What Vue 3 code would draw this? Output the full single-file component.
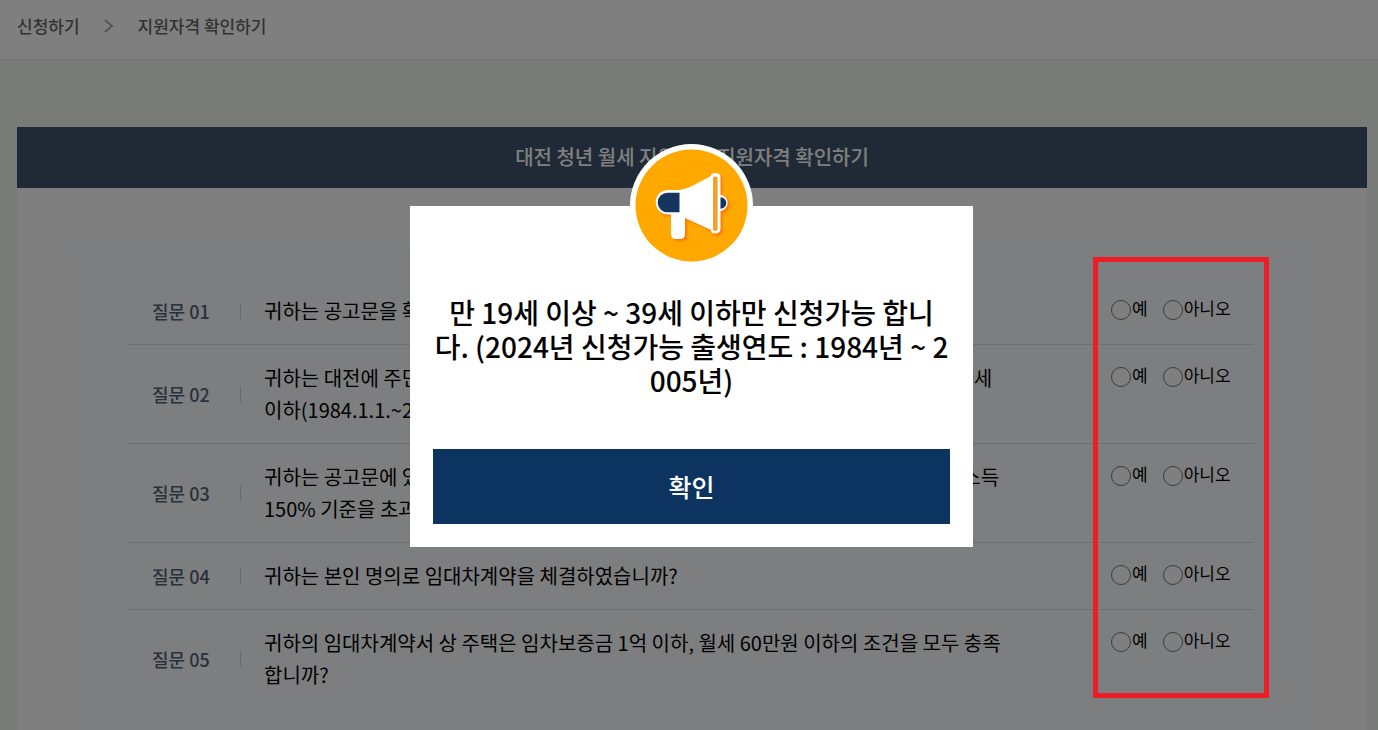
<script setup>
import { ref } from 'vue'

const questions = ref([
  { no: '01', text: '귀하는 공고문을 확인하였습니까?', answer: null },
  {
    no: '02',
    text: '귀하는 대전에 주민등록을 두고 현재 계속 거주하는 무주택 청년으로 만 19세 이상 만 39세 이하(1984.1.1.~2005.12.31.)입니까?',
    answer: null,
  },
  {
    no: '03',
    text: '귀하는 공고문에 있는 소득기준을 확인하였으며 가구원수에 따른 본인가구의 기준중위소득 150% 기준을 초과하지 않습니까?',
    answer: null,
  },
  { no: '04', text: '귀하는 본인 명의로 임대차계약을 체결하였습니까?', answer: null },
  {
    no: '05',
    text: '귀하의 임대차계약서 상 주택은 임차보증금 1억 이하, 월세 60만원 이하의 조건을 모두 충족합니까?',
    answer: null,
  },
])

const open = ref(true)
</script>

<template>
  <div class="page" :class="{ locked: open }">
    <nav class="crumbs">
      <a href="#">신청하기</a>
      <svg class="chevron" viewBox="0 0 10 14" aria-hidden="true">
        <path d="M1 1l7 6-7 6" />
      </svg>
      <a href="#">지원자격 확인하기</a>
    </nav>

    <main class="content">
      <h1 class="title">대전 청년 월세 지원사업 지원자격 확인하기</h1>
      <div class="card">
        <div class="panel">
          <div class="list">
            <div v-for="q in questions" :key="q.no" class="row">
              <span class="label">질문 {{ q.no }}</span>
              <p class="question">{{ q.text }}</p>
              <div class="answers">
                <label class="choice">
                  <input v-model="q.answer" type="radio" :name="'q' + q.no" value="yes" />예
                </label>
                <label class="choice">
                  <input v-model="q.answer" type="radio" :name="'q' + q.no" value="no" />아니오
                </label>
              </div>
            </div>
            <div class="highlight"></div>
          </div>
        </div>
      </div>
    </main>

    <div v-if="open" class="overlay">
      <div class="modal" role="alertdialog" aria-modal="true" aria-describedby="notice">
        <svg class="badge" viewBox="0 0 123 123" aria-hidden="true">
          <circle cx="61.500" cy="61.500" r="61.500" fill="#fff" />
          <circle cx="61.500" cy="61.500" r="56" fill="#ffa800" />
          <g class="horn">
            <circle cx="89.500" cy="59" r="8.200" fill="#fff" />
            <path d="M41 66H55V90Q55 95 50 95H46Q41 95 41 90Z" fill="#fff" />
            <path d="M38 46H50Q57 45 64 41L81 32Q81 29 85.500 29T90.500 33V85Q90 89.500 85.500 89.500T81 86L55 74V70.500H38A12.200 12.200 0 0 1 38 46Z" fill="#fff" />
          </g>
          <path d="M49.500 48.700H37.500A9.700 9.700 0 0 0 37.500 68.300H49.500Z" fill="#15355f" />
          <path d="M90.500 53.200A5.800 5.800 0 0 1 90.500 64.800Z" fill="#15355f" />
          <rect x="83" y="32.500" width="4.600" height="54.500" rx="2" fill="#f2a02c" />
        </svg>
        <p id="notice" class="notice">만 19세 이상 ~ 39세 이하만 신청가능 합니다. (2024년 신청가능 출생연도 : 1984년 ~ 2005년)</p>
        <button class="confirm" type="button" @click="open = false">확인</button>
      </div>
    </div>
  </div>
</template>

<style>
body {
  background: #f3f7f0;
}
</style>

<style scoped>
.page {
  min-height: 100vh;
  background: #f3f7f0;
  color: #000;
  font-family: "Noto Sans CJK KR", "Noto Sans", sans-serif;
}

.page.locked {
  height: 100vh;
  overflow: hidden;
}

.crumbs {
  display: flex;
  align-items: center;
  gap: 24px;
  padding: 12px 17px 19px;
  border-bottom: 1px solid #e4e4e4;
  background: #fff;
  font-size: 17px;
  font-weight: 500;
  line-height: 28px;
}

.crumbs a {
  color: #666;
  text-decoration: none;
}

.chevron {
  width: 10px;
  height: 14px;
  fill: none;
  stroke: #a8a8a8;
  stroke-width: 2;
}

.content {
  padding: 67px 11px 0 17px;
}

.title {
  margin: 0;
  padding-bottom: 1px;
  background: #3e556c;
  color: #fff;
  font-size: 20px;
  font-weight: 500;
  line-height: 60px;
  text-align: center;
}

.card {
  padding: 55px 57px 55px 55px;
  background: #fff;
}

.panel {
  padding: 35px 56px;
  background: #f8fcfe;
}

.list {
  position: relative;
}

.row {
  display: grid;
  grid-template-columns: 89px 1fr 143px;
  padding: 17px 0 17px 24px;
}

.row + .row {
  border-top: 1px solid #d8dee2;
}

.label {
  display: flex;
  align-items: center;
  justify-content: space-between;
  color: #53637a;
  font-size: 18px;
  font-weight: 500;
  line-height: 30px;
}

.label::after {
  width: 1px;
  height: 16px;
  background: #d0d7dd;
  content: "";
}

.question {
  margin: 0;
  padding: 0 104px 0 23px;
  font-size: 20px;
  line-height: 32px;
}

.answers {
  display: flex;
  align-items: flex-start;
  gap: 15px;
}

.choice {
  display: flex;
  align-items: center;
  gap: 1px;
  font-size: 17px;
  line-height: 26px;
  white-space: nowrap;
}

.choice input {
  width: 20px;
  height: 20px;
  margin: 4px 0 0;
  border: 1px solid #767676;
  border-radius: 50%;
  background: #fff;
  appearance: none;
}

.choice input:checked {
  background: radial-gradient(#0d3461 50%, #fff 55%);
}

.highlight {
  position: absolute;
  z-index: 2;
  top: -21px;
  right: -15px;
  bottom: 10px;
  width: 166px;
  border: 5px solid #ee1c25;
  pointer-events: none;
}

.overlay {
  position: fixed;
  z-index: 1;
  inset: 0;
  display: flex;
  align-items: flex-start;
  justify-content: center;
  padding: 206px 0 0 5px;
  background: rgba(0, 0, 0, 0.5);
}

.modal {
  position: relative;
  box-sizing: border-box;
  width: 563px;
  padding: 89px 23px 23px;
  background: #fff;
}

.badge {
  position: absolute;
  top: -62px;
  left: 220px;
  width: 123px;
  height: 123px;
}

.horn {
  filter: drop-shadow(2px 2px 1px #ff7800);
}

.notice {
  margin: 0 0 52px;
  font-size: 28px;
  font-weight: 500;
  line-height: 34px;
  text-align: center;
  word-break: break-all;
}

.confirm {
  display: block;
  width: 100%;
  height: 75px;
  padding: 0 0 2px;
  border: 0;
  background: #0d3461;
  color: #fff;
  font-family: inherit;
  font-size: 25px;
  font-weight: 500;
  cursor: pointer;
}
</style>
